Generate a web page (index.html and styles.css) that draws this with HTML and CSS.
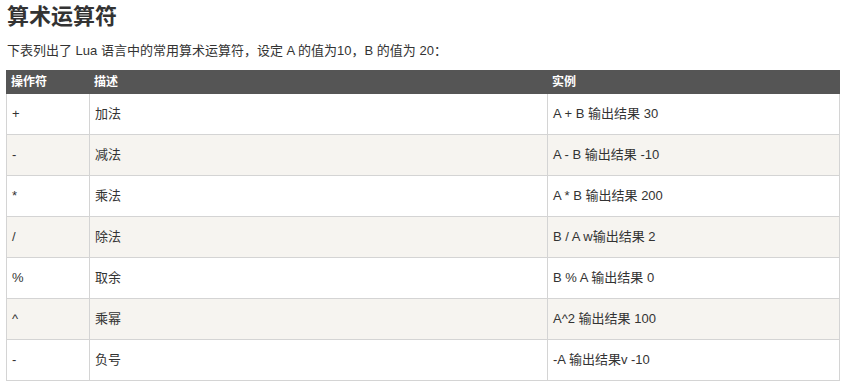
FILE: index.html
```html
<!DOCTYPE html>
<html lang="zh-CN">
<head>
<meta charset="utf-8">
<title>算术运算符</title>
<link rel="stylesheet" href="styles.css">
</head>
<body>
<div class="page">
  <h2 class="title">算术运算符</h2>
  <p class="intro">下表列出了 Lua 语言中的常用算术运算符，设定 A 的值为10，B 的值为 20：</p>
  <table class="reference">
    <colgroup>
      <col class="c1">
      <col class="c2">
      <col class="c3">
    </colgroup>
    <thead>
      <tr><th>操作符</th><th>描述</th><th>实例</th></tr>
    </thead>
    <tbody>
      <tr><td>+</td><td>加法</td><td>A + B 输出结果 30</td></tr>
      <tr><td>-</td><td>减法</td><td>A - B 输出结果 -10</td></tr>
      <tr><td>*</td><td>乘法</td><td>A * B 输出结果 200</td></tr>
      <tr><td>/</td><td>除法</td><td>B / A w输出结果 2</td></tr>
      <tr><td>%</td><td>取余</td><td>B % A 输出结果 0</td></tr>
      <tr><td>^</td><td>乘幂</td><td>A^2 输出结果 100</td></tr>
      <tr><td>-</td><td>负号</td><td>-A 输出结果v -10</td></tr>
    </tbody>
  </table>
</div>
</body>
</html>
```

FILE: styles.css
```css
html, body {
  margin: 0;
  padding: 0;
  background: #fff;
}
body {
  font-family: "Liberation Sans", "Noto Sans CJK SC", sans-serif;
  color: #333;
}
.page {
  padding: 0 9px 0 6px;
}
.title {
  margin: 0 0 0 1px;
  font-size: 22px;
  line-height: 34px;
  font-weight: bold;
  color: #333;
}
.intro {
  margin: 7px 0 9px 1px;
  font-size: 13px;
  line-height: 20px;
}
.reference {
  width: 833px;
  border-collapse: collapse;
  table-layout: fixed;
  font-size: 13px;
}
.c1 { width: 83px; }
.c2 { width: 458px; }
.c3 { width: 292px; }
.reference th {
  background: #555;
  color: #fff;
  font-size: 12px;
  font-weight: bold;
  text-align: left;
  padding: 3px 4px;
  line-height: 16px;
  border: 1px solid #555;
}
.reference td {
  border: 1px solid #d4d4d4;
  padding: 7px 5px;
  line-height: 26px;
  vertical-align: top;
}
.reference tbody tr:nth-child(even) td {
  background: #f6f4f0;
}
```
